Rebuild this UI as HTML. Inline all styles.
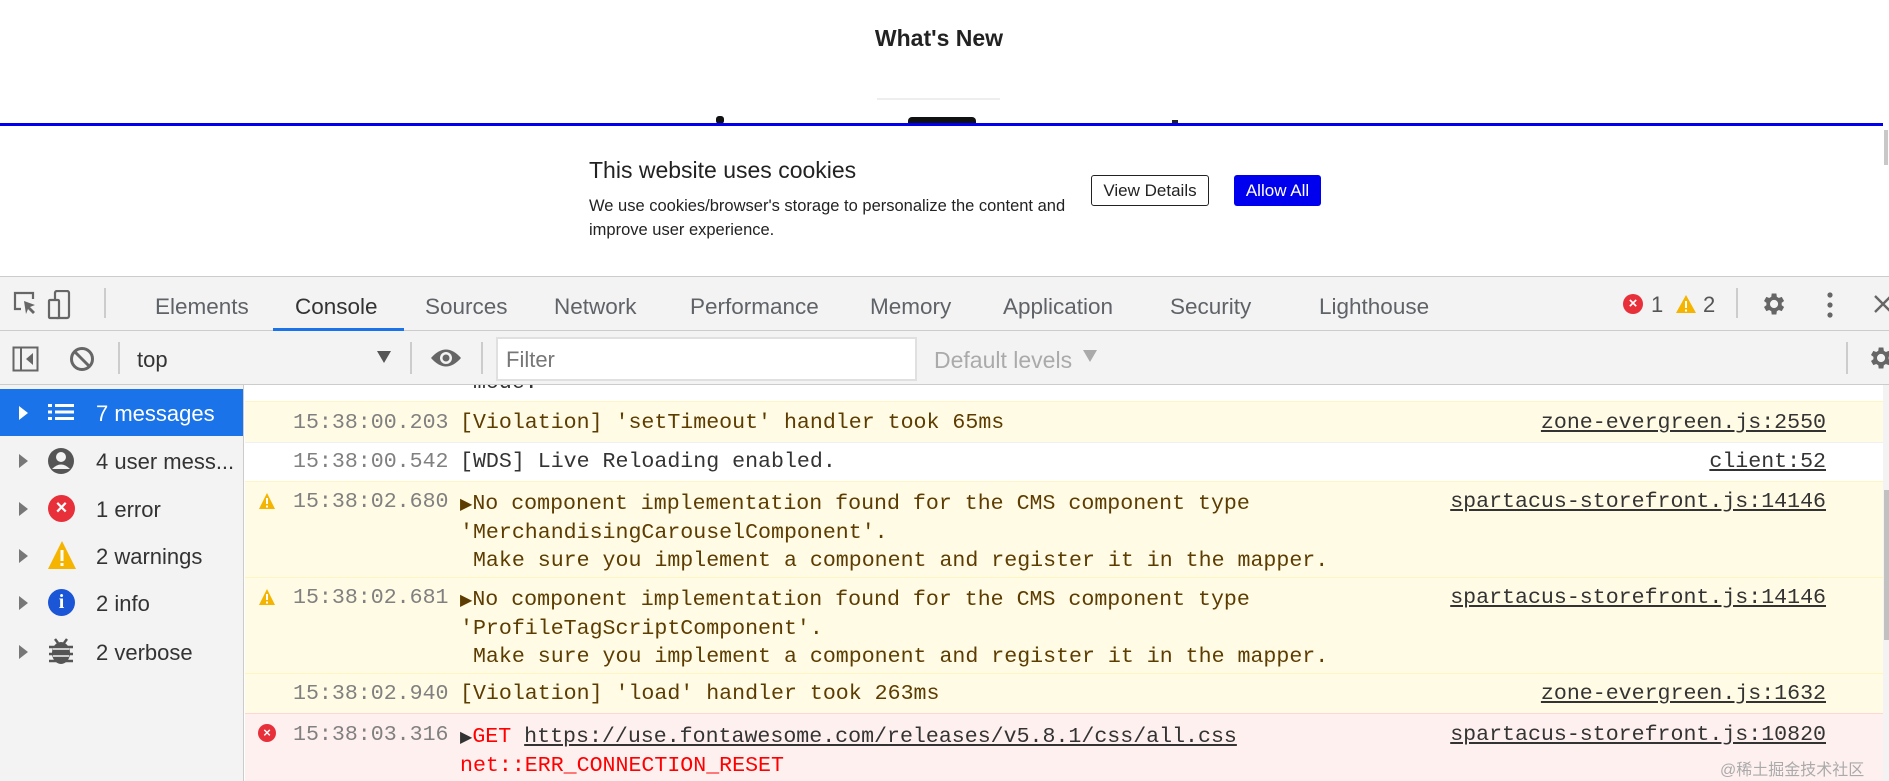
<!DOCTYPE html>
<html><head><meta charset="utf-8"><style>
*{margin:0;padding:0;box-sizing:border-box}
body{width:1889px;height:781px;overflow:hidden;background:#fff;font-family:"Liberation Sans",sans-serif;position:relative}
.a{position:absolute}
.tab{position:absolute;top:294px;font-size:22.5px;color:#5f6368;white-space:nowrap}
.mono{font-family:"Liberation Mono",monospace;font-size:21.6px;white-space:pre}
.side{position:absolute;left:0;width:243px;height:47px;font-size:22px;color:#333}
.side .t{position:absolute;left:96px;top:12px;white-space:nowrap}
.side .tri{position:absolute;left:19px;top:17px;width:0;height:0;border-left:9px solid #777;border-top:7px solid transparent;border-bottom:7px solid transparent}
.row{position:absolute;left:245px;width:1638px}
.y{background:#fffbe5;border-top:1px solid #fff5c2;color:#5c3c00}
.time{position:absolute;left:48px;color:#808080}
.msg{position:absolute;left:215px}
.link{position:absolute;right:57px;text-decoration:underline;color:#333}
</style></head><body>
<div class="a" style="left:0;top:25px;width:1878px;text-align:center;font-size:23px;font-weight:bold;color:#222">What's New</div>
<div class="a" style="left:877px;top:98px;width:123px;height:2px;background:#eee"></div>
<div class="a" style="left:716px;top:116px;width:8px;height:8px;background:#111;border-radius:3px"></div>
<div class="a" style="left:908px;top:117px;width:68px;height:7px;background:#111;border-radius:4px 4px 0 0"></div>
<div class="a" style="left:1172px;top:120px;width:6px;height:4px;background:#222"></div>
<div class="a" style="left:0;top:123px;width:1883px;height:3px;background:#0000ee"></div>
<div class="a" style="left:1884px;top:126px;width:5px;height:150px;background:#fff"></div>
<div class="a" style="left:1884px;top:130px;width:4px;height:35px;background:#c8c8c8"></div>
<div class="a" style="left:589px;top:157px;font-size:23px;color:#222">This website uses cookies</div>
<div class="a" style="left:589px;top:194px;font-size:16.5px;line-height:24px;color:#222">We use cookies/browser's storage to personalize the content and<br>improve user experience.</div>
<div class="a" style="left:1091px;top:175px;width:118px;height:31px;border:1px solid #222;border-radius:3px;font-size:17px;text-align:center;line-height:29px;color:#222">View Details</div>
<div class="a" style="left:1234px;top:175px;width:87px;height:31px;background:#0000ee;border-radius:3px;font-size:17px;text-align:center;line-height:31px;color:#fff">Allow All</div>
<div class="a" style="left:0;top:276px;width:1889px;height:55px;background:#f3f3f3;border-top:1px solid #ccc;border-bottom:1px solid #ccc"></div>
<svg class="a" style="left:12px;top:290px" width="60" height="30" viewBox="0 0 60 30"><path d="M9 19H3V3h18v6" fill="none" stroke="#666" stroke-width="2.2"/><path d="M12 11l11 4-5 2 5 5-2 2-5-5-2 5z" fill="#666"/><rect x="43" y="1" width="14" height="27" rx="2" fill="none" stroke="#666" stroke-width="2.2"/><rect x="37" y="10" width="10" height="18" rx="1" fill="#f3f3f3" stroke="#666" stroke-width="2.2"/></svg>
<div class="a" style="left:104px;top:288px;width:2px;height:30px;background:#ccc"></div>
<div class="tab" style="left:155px">Elements</div>
<div class="tab" style="left:295px;color:#333">Console</div>
<div class="tab" style="left:425px">Sources</div>
<div class="tab" style="left:554px">Network</div>
<div class="tab" style="left:690px">Performance</div>
<div class="tab" style="left:870px">Memory</div>
<div class="tab" style="left:1003px">Application</div>
<div class="tab" style="left:1170px">Security</div>
<div class="tab" style="left:1319px">Lighthouse</div>
<div class="a" style="left:273px;top:328px;width:131px;height:3px;background:#1a73e8"></div>
<div class="a" style="left:1623px;top:294px;width:20px;height:20px;border-radius:50%;background:#e8303a;color:#fff;font-size:15px;font-weight:bold;text-align:center;line-height:20px">×</div>
<div class="a" style="left:1651px;top:292px;font-size:22px;color:#555">1</div>
<svg class="a" style="left:1675px;top:294px" width="22" height="20"><path d="M11 1L21 19H1z" fill="#f4b400"/><rect x="10" y="7" width="2" height="7" fill="#fff"/><rect x="10" y="15.5" width="2" height="2" fill="#fff"/></svg>
<div class="a" style="left:1703px;top:292px;font-size:22px;color:#555">2</div>
<div class="a" style="left:1736px;top:288px;width:2px;height:30px;background:#ccc"></div>
<svg class="a" style="left:1759px;top:290px" width="28" height="28" viewBox="0 0 24 24"><path fill="#666" d="M19.4 13a7.5 7.5 0 000-2l2.1-1.6-2-3.5-2.5 1a7.3 7.3 0 00-1.7-1L14.9 3h-4l-.4 2.9a7.3 7.3 0 00-1.7 1l-2.5-1-2 3.5L6.4 11a7.5 7.5 0 000 2l-2.1 1.6 2 3.5 2.5-1a7.3 7.3 0 001.7 1l.4 2.9h4l.4-2.9a7.3 7.3 0 001.7-1l2.5 1 2-3.5zM12.9 15.5a3.5 3.5 0 110-7 3.5 3.5 0 010 7z"/></svg>
<svg class="a" style="left:1825px;top:291px" width="10" height="28"><circle cx="5" cy="4" r="2.6" fill="#666"/><circle cx="5" cy="14" r="2.6" fill="#666"/><circle cx="5" cy="24" r="2.6" fill="#666"/></svg>
<svg class="a" style="left:1873px;top:294px" width="20" height="20"><path d="M2 2l16 16M18 2L2 18" stroke="#666" stroke-width="2.4"/></svg>
<div class="a" style="left:0;top:331px;width:1889px;height:54px;background:#f3f3f3;border-bottom:1px solid #ccc"></div>
<svg class="a" style="left:12px;top:346px" width="90" height="26"><rect x="1.5" y="1.5" width="24" height="23" fill="none" stroke="#666" stroke-width="2"/><path d="M9 2v22" stroke="#666" stroke-width="2"/><path d="M21 7v12l-7-6z" fill="#666"/><circle cx="70" cy="13" r="10.5" fill="none" stroke="#666" stroke-width="3"/><path d="M63 6l14 14" stroke="#666" stroke-width="3"/></svg>
<div class="a" style="left:118px;top:342px;width:2px;height:32px;background:#ccc"></div>
<div class="a" style="left:137px;top:347px;font-size:22px;color:#333">top</div>
<div class="a" style="left:377px;top:351px;width:0;height:0;border-top:12px solid #555;border-left:7px solid transparent;border-right:7px solid transparent"></div>
<div class="a" style="left:410px;top:342px;width:2px;height:32px;background:#ccc"></div>
<svg class="a" style="left:430px;top:347px" width="32" height="22"><path d="M1 11Q16-6 31 11Q16 28 1 11z" fill="#666"/><circle cx="16" cy="11" r="6" fill="#f3f3f3"/><circle cx="16" cy="11" r="3.5" fill="#666"/></svg>
<div class="a" style="left:481px;top:342px;width:2px;height:32px;background:#ccc"></div>
<div class="a" style="left:496px;top:337px;width:421px;height:44px;background:#fff;border:2px solid #e0e0e0"></div>
<div class="a" style="left:506px;top:347px;font-size:22px;color:#777">Filter</div>
<div class="a" style="left:934px;top:347px;font-size:23px;color:#aaa">Default levels</div>
<div class="a" style="left:1083px;top:350px;width:0;height:0;border-top:12px solid #aaa;border-left:7px solid transparent;border-right:7px solid transparent"></div>
<div class="a" style="left:1846px;top:342px;width:2px;height:32px;background:#ccc"></div>
<svg class="a" style="left:1866px;top:344px" width="28" height="28" viewBox="0 0 24 24"><path fill="#666" d="M19.4 13a7.5 7.5 0 000-2l2.1-1.6-2-3.5-2.5 1a7.3 7.3 0 00-1.7-1L14.9 3h-4l-.4 2.9a7.3 7.3 0 00-1.7 1l-2.5-1-2 3.5L6.4 11a7.5 7.5 0 000 2l-2.1 1.6 2 3.5 2.5-1a7.3 7.3 0 001.7 1l.4 2.9h4l.4-2.9a7.3 7.3 0 001.7-1l2.5 1 2-3.5zM12.9 15.5a3.5 3.5 0 110-7 3.5 3.5 0 010 7z"/></svg>
<div class="a" style="left:0;top:385px;width:244px;height:396px;background:#f3f3f3;border-right:1px solid #ccc"></div>
<div class="side" style="top:389px;background:#1a73e8;color:#fff"><div class="tri" style="border-left-color:#fff"></div>
<svg class="a" style="left:48px;top:14px" width="26" height="18"><g fill="#fff"><rect x="0" y="1" width="4" height="3"/><rect x="0" y="7.5" width="4" height="3"/><rect x="0" y="14" width="4" height="3"/><rect x="7" y="1" width="19" height="3"/><rect x="7" y="7.5" width="19" height="3"/><rect x="7" y="14" width="19" height="3"/></g></svg><div class="t">7 messages</div></div>
<div class="side" style="top:437px"><div class="tri"></div><svg class="a" style="left:47px;top:10px" width="28" height="28"><circle cx="14" cy="14" r="13" fill="#555"/><circle cx="14" cy="10" r="5" fill="#f3f3f3"/><path d="M5 22q9-9 18 0" fill="#f3f3f3"/></svg><div class="t">4 user mess...</div></div>
<div class="side" style="top:485px"><div class="tri"></div><div class="a" style="left:48px;top:10px;width:27px;height:27px;border-radius:50%;background:#e8303a;color:#fff;font-size:20px;font-weight:bold;text-align:center;line-height:27px">×</div><div class="t">1 error</div></div>
<div class="side" style="top:532px"><div class="tri"></div><svg class="a" style="left:47px;top:8px" width="30" height="30"><path d="M15 1L29 29H1z" fill="#f4b400"/><rect x="13.5" y="10" width="3" height="11" fill="#fff"/><rect x="13.5" y="23" width="3" height="3" fill="#fff"/></svg><div class="t">2 warnings</div></div>
<div class="side" style="top:579px"><div class="tri"></div><div class="a" style="left:48px;top:10px;width:27px;height:27px;border-radius:50%;background:#1a56d6;color:#fff;font-size:20px;font-weight:bold;text-align:center;line-height:27px;font-family:'Liberation Serif',serif">i</div><div class="t">2 info</div></div>
<div class="side" style="top:628px"><div class="tri"></div><svg class="a" style="left:48px;top:9px" width="26" height="28"><ellipse cx="13" cy="16" rx="9" ry="11" fill="#555"/><path d="M1 10h24M1 17h24M1 24h24M7 2l3 4M19 2l-3 4" stroke="#555" stroke-width="2.5"/><path d="M5 12h16M5 19h16" stroke="#f3f3f3" stroke-width="1.5"/></svg><div class="t">2 verbose</div></div>
<div class="row" style="top:385px;height:16px;overflow:hidden;background:#fff"><div class="mono msg" style="top:-14px;color:#333"> mode.</div></div>
<div class="row y mono" style="top:401px;height:41px"><div class="time" style="top:9px">15:38:00.203</div><div class="msg" style="top:9px">[Violation] 'setTimeout' handler took 65ms</div><div class="link" style="top:9px">zone-evergreen.js:2550</div></div>
<div class="row mono" style="top:442px;height:39px;background:#fff;border-top:1px solid #f0f0f0;color:#333"><div class="time" style="top:7px">15:38:00.542</div><div class="msg" style="top:7px">[WDS] Live Reloading enabled.</div><div class="link" style="top:7px">client:52</div></div>
<div class="row y mono" style="top:481px;height:96px"><svg class="a" style="left:13px;top:10px" width="18" height="18"><path d="M9 1L17 17H1z" fill="#f4b400"/><rect x="8" y="6" width="2" height="6" fill="#fff"/><rect x="8" y="13.5" width="2" height="2" fill="#fff"/></svg><div class="time" style="top:8px">15:38:02.680</div><div class="msg" style="top:8px;line-height:28px"><span style="font-size:16px">▶</span>No component implementation found for the CMS component type
'MerchandisingCarouselComponent'.
 Make sure you implement a component and register it in the mapper.</div><div class="link" style="top:8px">spartacus-storefront.js:14146</div></div>
<div class="row y mono" style="top:577px;height:96px"><svg class="a" style="left:13px;top:10px" width="18" height="18"><path d="M9 1L17 17H1z" fill="#f4b400"/><rect x="8" y="6" width="2" height="6" fill="#fff"/><rect x="8" y="13.5" width="2" height="2" fill="#fff"/></svg><div class="time" style="top:8px">15:38:02.681</div><div class="msg" style="top:8px;line-height:28px"><span style="font-size:16px">▶</span>No component implementation found for the CMS component type
'ProfileTagScriptComponent'.
 Make sure you implement a component and register it in the mapper.</div><div class="link" style="top:8px">spartacus-storefront.js:14146</div></div>
<div class="row y mono" style="top:673px;height:40px"><div class="time" style="top:8px">15:38:02.940</div><div class="msg" style="top:8px">[Violation] 'load' handler took 263ms</div><div class="link" style="top:8px">zone-evergreen.js:1632</div></div>
<div class="row mono" style="top:713px;height:68px;background:#fff0f0;border-top:1px solid #ffd6d6;color:#f00"><div class="a" style="left:13px;top:10px;width:18px;height:18px;border-radius:50%;background:#e8303a;color:#fff;font-size:13px;text-align:center;line-height:18px;font-family:'Liberation Sans',sans-serif;font-weight:bold">×</div><div class="time" style="top:9px">15:38:03.316</div><div class="msg" style="top:9px;line-height:28px"><span style="font-size:16px;color:#333">▶</span>GET <span style="text-decoration:underline;color:#333">https://use.fontawesome.com/releases/v5.8.1/css/all.css</span>
net::ERR_CONNECTION_RESET</div><div class="link" style="top:9px">spartacus-storefront.js:10820</div></div>
<div class="a" style="left:1883px;top:385px;width:6px;height:396px;background:#f3f3f3"></div>
<div class="a" style="left:1884px;top:490px;width:5px;height:150px;background:#c1c1c1"></div>
<div class="a" style="left:1720px;top:756px;font-size:16px;color:#aaa;font-family:'Liberation Sans','Noto Sans CJK SC',sans-serif">@稀土掘金技术社区</div>
</body></html>
